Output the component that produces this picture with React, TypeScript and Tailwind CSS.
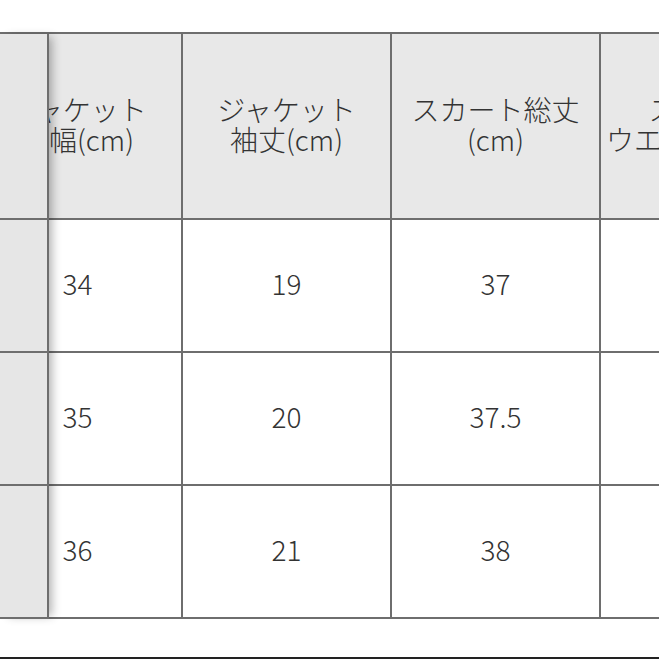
import React from "react";

const headers: string[][] = [
  ["ジャケット", "身幅(cm)"],
  ["ジャケット", "袖丈(cm)"],
  ["スカート総丈", "(cm)"],
  ["スカート", "ウエスト幅(cm)"],
];

const rows: string[][] = [
  ["34", "19", "37", "60"],
  ["35", "20", "37.5", "62"],
  ["36", "21", "38", "64"],
];

const font = { fontFamily: '"Noto Sans CJK JP", "Noto Sans", sans-serif' };

export default function App() {
  return (
    <div
      className="w-[659px] h-[659px] bg-white flex flex-col overflow-hidden text-[#333]"
      style={font}
    >
      <div className="h-[32px] shrink-0" />
      <div className="flex border-t-2 border-[#6e6e6e] shrink-0">
        {/* sticky column */}
        <div className="relative z-10 w-[49px] shrink-0 flex flex-col bg-[#e6e6e6] border-r-2 border-[#6e6e6e] shadow-[6px_0_9px_-3px_rgba(0,0,0,0.3)]">
          <div className="h-[186px] border-b-2 border-[#6e6e6e]" />
          {rows.map((_, i) => (
            <div key={i} className="h-[133px] border-b-2 border-[#6e6e6e]" />
          ))}
        </div>
        {/* scrolled area */}
        <div className="flex-1 overflow-hidden">
          <div className="ml-[-75px] w-max flex flex-col">
            <div className="flex bg-[#e8e8e8]">
              {headers.map((h, i) => (
                <div
                  key={i}
                  className="w-[209px] h-[186px] shrink-0 flex flex-col items-center justify-center pb-[5px] border-r-2 border-b-2 border-[#6e6e6e] text-[28px] leading-[30px] font-light whitespace-nowrap"
                >
                  <span>{h[0]}</span>
                  <span>{h[1]}</span>
                </div>
              ))}
            </div>
            {rows.map((r, i) => (
              <div key={i} className="flex bg-white">
                {r.map((v, j) => (
                  <div
                    key={j}
                    className="w-[209px] h-[133px] shrink-0 flex items-center justify-center pb-[5px] border-r-2 border-b-2 border-[#6e6e6e] text-[28px] font-light"
                  >
                    {v}
                  </div>
                ))}
              </div>
            ))}
          </div>
        </div>
      </div>
      <div className="flex-1" />
      <div className="h-[2px] bg-[#222] shrink-0" />
    </div>
  );
}
